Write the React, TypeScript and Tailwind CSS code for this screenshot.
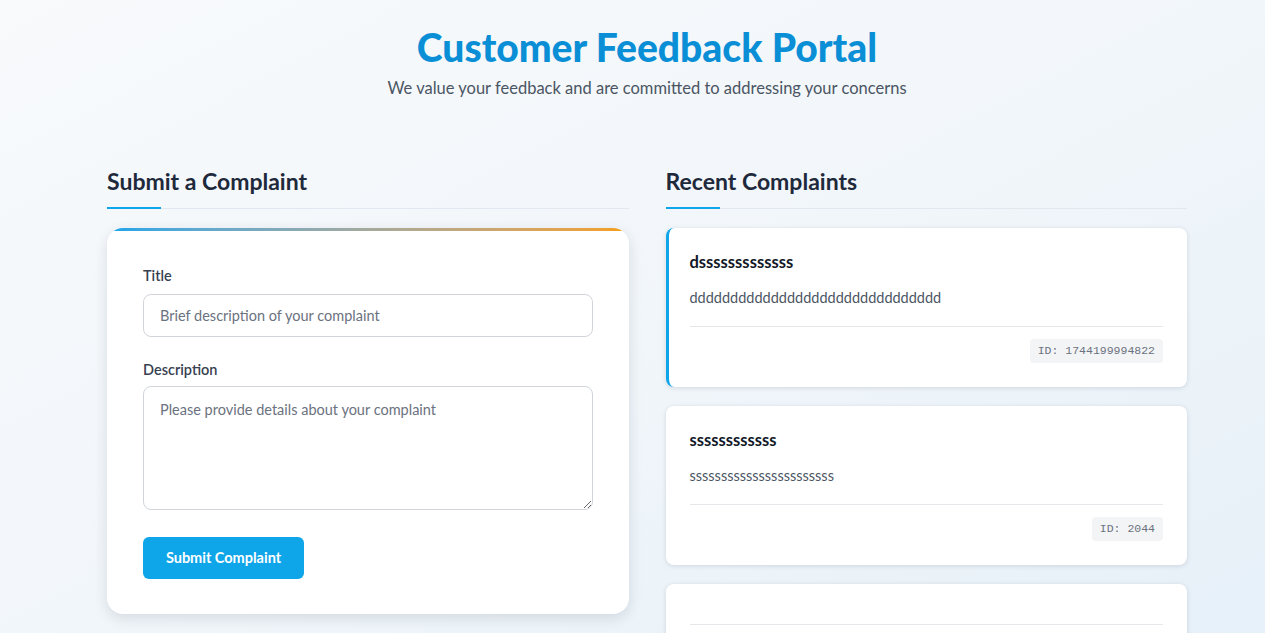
const complaints = [
  { id: 1744199994822, title: 'dsssssssssssss', description: 'ddddddddddddddddddddddddddddddd', active: true },
  { id: 2044, title: 'ssssssssssss', description: 'sssssssssssssssssssssss', active: false },
  { id: 0, title: '', description: '', active: false },
]

const SectionTitle = ({ children }: { children: React.ReactNode }) => (
  <div className="mb-[19px]">
    <h2 className="text-[23px] leading-[30px] font-bold text-[#1e293b] pb-[10px]">{children}</h2>
    <div className="flex items-end h-[3px]">
      <div className="w-[54px] h-[2px] bg-[#0ea5e9]" />
      <div className="flex-1 h-px bg-[#e2e8f0]" />
    </div>
  </div>
)

const App = () => {
  return (
    <div
      className="min-h-screen pl-[29px] bg-gradient-to-br from-[#f8fafc] via-[#f1f6fa] to-[#e6f0f8] text-[#1f2937]"
      style={{ fontFamily: 'Lato, "Noto Sans", sans-serif' }}
    >
      <header className="text-center pt-[24px]">
        <h1 className="text-[39px] leading-[46px] font-black text-[#0a8fd6]">Customer Feedback Portal</h1>
        <p className="mt-[6px] text-[16.5px] text-[#4b5563]">
          We value your feedback and are committed to addressing your concerns
        </p>
      </header>

      <main className="max-w-[1080px] mx-auto mt-[65px] grid grid-cols-2 gap-[37px]">
        <section>
          <SectionTitle>Submit a Complaint</SectionTitle>
          <div className="bg-white rounded-2xl shadow-[0_4px_14px_rgba(15,23,42,0.12)] overflow-hidden">
            <div className="h-[3px] bg-gradient-to-r from-[#0ea5e9] to-[#f59e0b]" />
            <form className="px-9 pt-[35px] pb-[35px]">
              <div className="mb-[23px]">
                <label className="block text-[14.5px] font-semibold text-[#374151] mb-2 leading-5">Title</label>
                <input
                  className="w-full h-[43px] rounded-lg border border-[#d1d5db] px-4 text-[14.5px] placeholder:text-[#6b7280] outline-none"
                  placeholder="Brief description of your complaint"
                />
              </div>
              <div className="mb-[27px]">
                <label className="block text-[14.5px] font-semibold text-[#374151] mb-[6px] leading-5">Description</label>
                <textarea
                  className="w-full h-[124px] rounded-lg border border-[#d1d5db] px-4 py-3 text-[14.5px] placeholder:text-[#6b7280] outline-none block"
                  placeholder="Please provide details about your complaint"
                />
              </div>
              <button
                type="button"
                className="h-[42px] w-[161px] rounded-md bg-[#0ea5e9] text-white text-[14.5px] font-bold"
              >
                Submit Complaint
              </button>
            </form>
          </div>
        </section>

        <section>
          <SectionTitle>Recent Complaints</SectionTitle>
          <div className="flex flex-col gap-[19px]">
            {complaints.map((c, i) => (
              <div
                key={i}
                className={`bg-white rounded-lg shadow-[0_1px_5px_rgba(15,23,42,0.13)] px-6 pt-[22px] pb-6 ${c.active ? 'border-l-[3px] border-[#0ea5e9] pl-[21px]' : ''}`}
              >
                <h3 className="text-[16.5px] font-bold text-[#111827] leading-6 mb-[14px]">{c.title}</h3>
                <p className="text-[14.5px] text-[#4b5563] leading-5 mb-[18px]">{c.description}</p>
                <div className="border-t border-[#e5e7eb] pt-3 flex justify-end">
                  {c.title && (
                    <span
                      className="bg-[#f3f4f6] text-[#6b7280] text-[11.5px] leading-4 px-2 py-1 rounded"
                      style={{ fontFamily: '"Liberation Mono", monospace' }}
                    >
                      ID: {c.id}
                    </span>
                  )}
                </div>
              </div>
            ))}
          </div>
        </section>
      </main>
    </div>
  )
}

export default App
